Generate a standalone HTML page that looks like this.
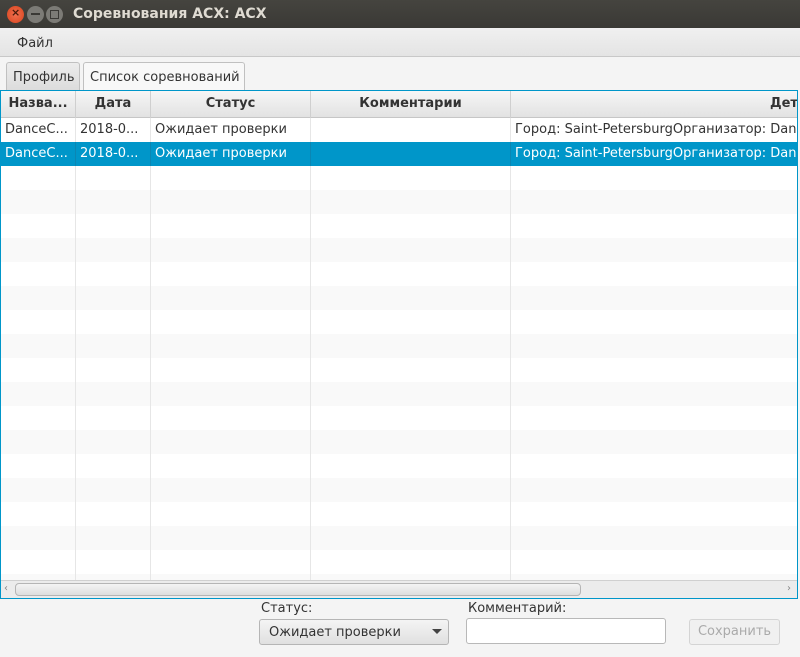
<!DOCTYPE html>
<html><head><meta charset="utf-8"><style>
*{margin:0;padding:0;box-sizing:border-box}
body{width:800px;height:657px;background:#f4f4f4;font-family:"DejaVu Sans","Liberation Sans",sans-serif;font-size:13px;color:#333;position:relative;overflow:hidden}
.a{position:absolute;white-space:nowrap}
.title{left:0;top:0;width:800px;height:28px;background:linear-gradient(#45443f,#3a3935);color:#dfdbd2;font-weight:bold;font-size:14px}
.btn{width:17px;height:17px;border-radius:50%;top:6px}
.menu{top:28px;left:0;width:800px;height:29px;background:linear-gradient(#f0f0f0,#e4e4e4);border-bottom:1px solid #c8c8c8}
.tab{height:28px;top:62px;border:1px solid #c0c0c0;border-bottom:none;border-radius:3px 3px 0 0;padding:6px 6px 0}
.tbl{left:0;top:90px;width:798px;height:509px;border:1px solid #0096c9;background:#fff;overflow:hidden}
.hdr{top:0;left:0;height:27px;width:800px;background:linear-gradient(#f6f6f6,#e2e2e2);border-bottom:1px solid #c6c6c6;font-weight:bold}
.hc{top:0;height:27px;border-right:1px solid #cfcfcf;text-align:center;line-height:26px}
.row{left:0;width:800px;height:24px;line-height:23px}
.c{top:0;height:24px;border-right:1px solid #e6e6e6;padding-left:4px;overflow:hidden}
.sel{background:#0096c9;color:#fff}
.sel .c{border-right-color:#0b86b3}
</style></head><body>
<div class="a title">
<div class="a btn" style="left:7px;background:radial-gradient(#f07050,#d9431c)"><span class="a" style="left:4px;top:0px;font-size:11px;color:#4a1a0a">×</span></div>
<div class="a btn" style="left:27px;background:#7c7b76"><div class="a" style="left:4px;top:7px;width:9px;height:2px;background:#3a3935"></div></div>
<div class="a btn" style="left:46px;background:#7c7b76"><div class="a" style="left:4px;top:4px;width:9px;height:9px;border:1.5px solid #3a3935"></div></div>
<div class="a" style="left:73px;top:6px">Соревнования ACX: ACX</div>
</div>
<div class="a menu"><div class="a" style="left:17px;top:8px">Файл</div></div>
<div class="a tab" style="left:6px;width:74px;background:linear-gradient(#ececec,#dcdcdc);padding-top:7px">Профиль</div>
<div class="a tab" style="left:83px;width:162px;background:#f8f8f8;padding-top:7px">Список соревнований</div>
<div class="a tbl">
<div class="a hdr">
<div class="a hc" style="left:0;width:75px">Назва...</div>
<div class="a hc" style="left:75px;width:75px">Дата</div>
<div class="a hc" style="left:150px;width:160px">Статус</div>
<div class="a hc" style="left:310px;width:200px">Комментарии</div>
<div class="a hc" style="left:510px;width:290px;text-align:left;padding-left:259px">Детали</div>
</div>
<div id="rows"></div>
<div class="a" style="left:0;top:489px;width:797px;height:18px;background:#ececec;border-top:1px solid #d0d0d0">
<div class="a" style="left:3px;top:2px;font-size:10px;color:#888">‹</div>
<div class="a" style="left:14px;top:2px;width:566px;height:13px;border:1px solid #b5b5b5;border-radius:4px;background:linear-gradient(#f4f4f4,#dedede)"></div>
<div class="a" style="left:786px;top:2px;font-size:10px;color:#888">›</div>
</div>
</div>
<div class="a" style="left:261px;top:601px">Статус:</div>
<div class="a" style="left:259px;top:619px;width:190px;height:26px;border:1px solid #b5b5b5;border-radius:3px;background:linear-gradient(#f4f4f4,#e0e0e0);padding:5px 9px">Ожидает проверки<span class="a" style="left:172px;top:9px;border:5px solid transparent;border-top:5px solid #444;border-bottom:0"></span></div>
<div class="a" style="left:468px;top:601px">Комментарий:</div>
<div class="a" style="left:466px;top:618px;width:200px;height:26px;border:1px solid #b8b8b8;border-radius:3px;background:#fff"></div>
<div class="a" style="left:689px;top:619px;width:91px;height:26px;border:1px solid #d4d4d4;border-radius:3px;background:#f0f0f0;color:#aaa;text-align:center;line-height:24px">Сохранить</div>
<script>
var h='',t=27;
for(var i=0;i<20;i++){
var sel=i==1,bg=sel?'':(i%2?'background:#f9f9f9':'background:#fff');
var d=i<2;
h+='<div class="a row'+(sel?' sel':'')+'" style="top:'+t+'px;'+bg+'">'+
'<div class="a c" style="left:0;width:75px">'+(d?'DanceC...':'')+'</div>'+
'<div class="a c" style="left:75px;width:75px">'+(d?'2018-0...':'')+'</div>'+
'<div class="a c" style="left:150px;width:160px">'+(d?'Ожидает проверки':'')+'</div>'+
'<div class="a c" style="left:310px;width:200px"></div>'+
'<div class="a c" style="left:510px;width:290px">'+(d?'Город: Saint-PetersburgОрганизатор: Dance':'')+'</div></div>';
t+=24;}
document.getElementById('rows').innerHTML=h;
</script>
</body></html>
